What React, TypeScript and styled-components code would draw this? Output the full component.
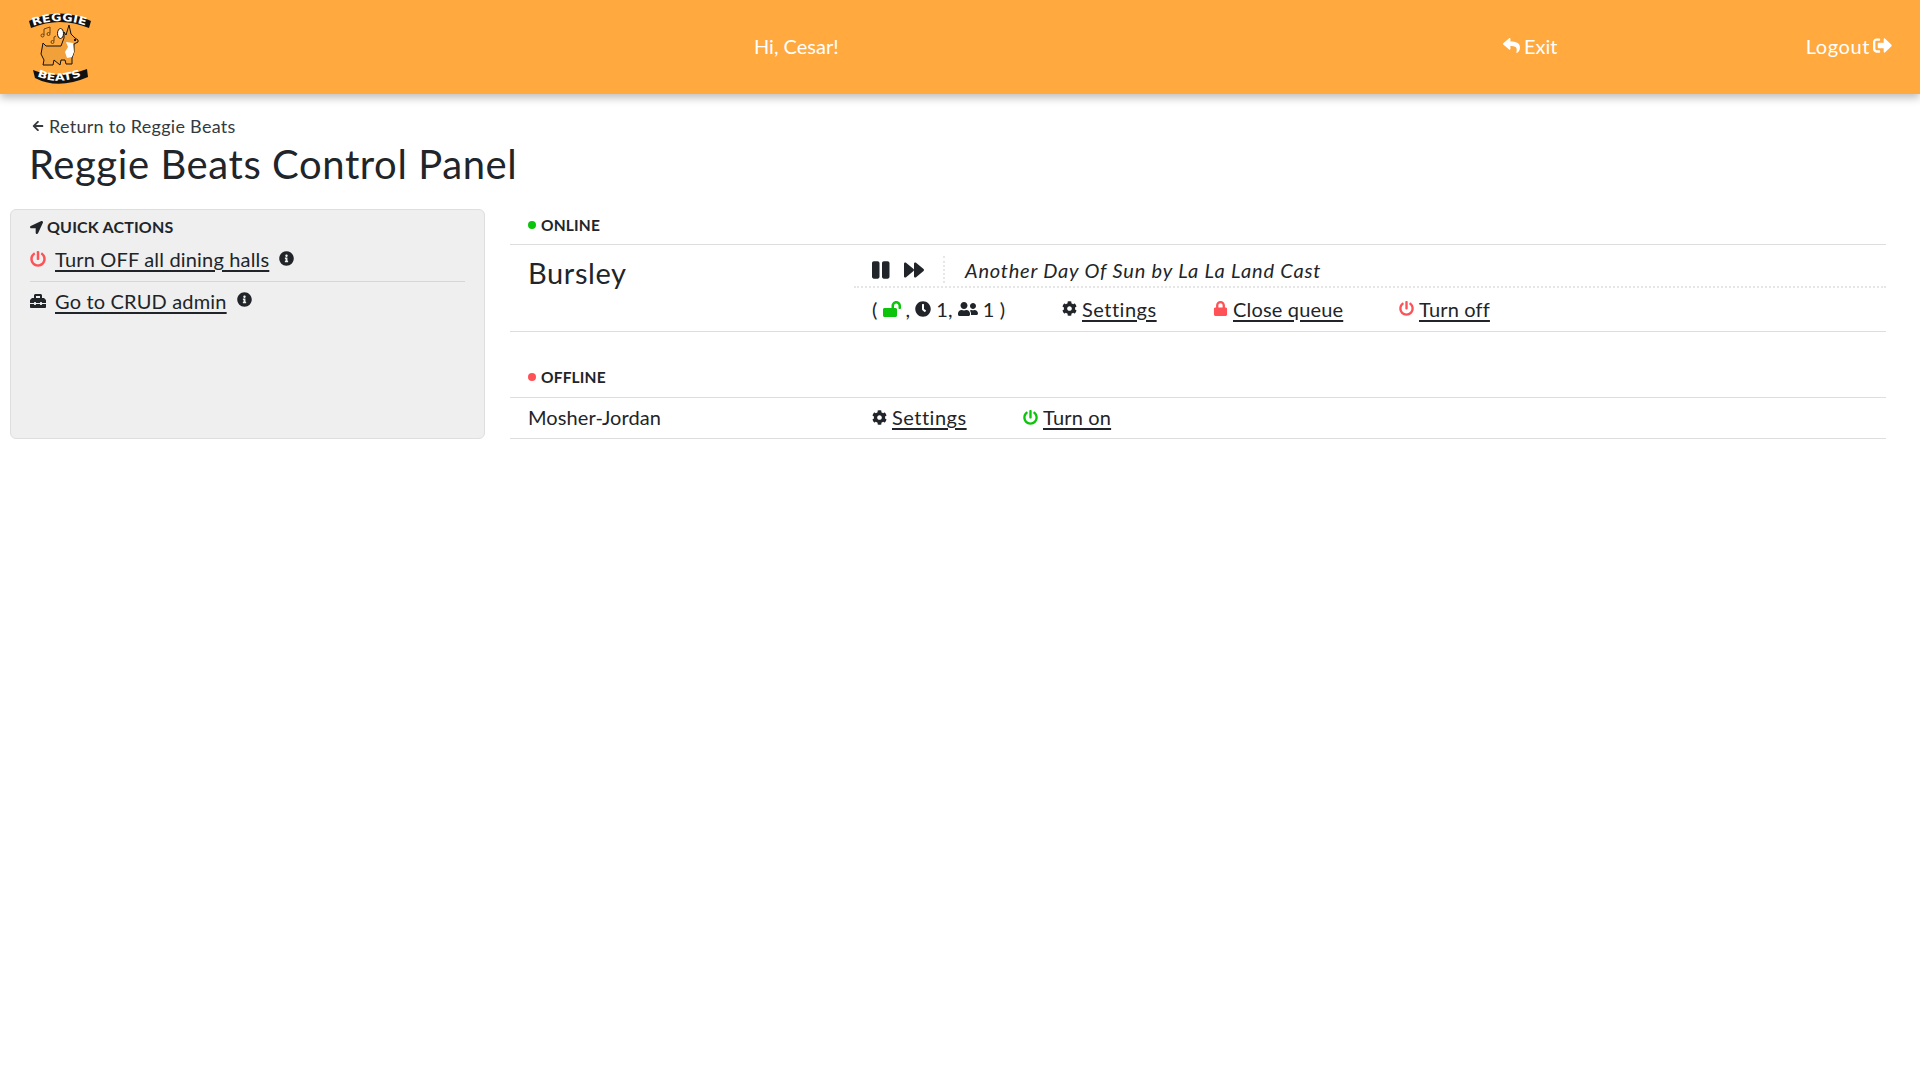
import React from "react";
import styled, { createGlobalStyle } from "styled-components";
import {
  FaArrowLeft, FaClock, FaCog, FaForward, FaInfoCircle, FaLocationArrow, FaLock, FaLockOpen,
  FaPause, FaPowerOff, FaReply, FaSignOutAlt, FaToolbox, FaUserFriends,
} from "react-icons/fa";

const INK = "#212529";
const RED = "#ff5257";
const GREEN = "#0cc40c";

const Global = createGlobalStyle`
  html, body { margin: 0; padding: 0; background: #fff; }
  body { font-family: "Lato", "Noto Sans", sans-serif; color: ${INK}; font-size: 20px; letter-spacing: .17px; }
`;

const Header = styled.header`
  height: 94px; box-sizing: border-box; background: #ffa93f; box-shadow: 0 4px 8px rgba(0,0,0,.25);
  display: grid; grid-template-columns: 726px 749px auto 1fr; align-items: center;
  padding: 0 28px 3px; color: #fff; font-size: 20px;
`;
const NavItem = styled.span`
  display: flex; align-items: center; gap: 4px; letter-spacing: 0;
  svg { width: 17px; height: 17px; }
`;
const LogoutItem = styled.span`
  display: flex; align-items: center; justify-content: flex-end; gap: 3px; letter-spacing: .6px;
  svg { width: 19px; height: 19px; }
`;
const LogoBox = styled.div`display: flex; margin-top: 3px;`;
const Top = styled.div`padding: 22px 0 0 29px;`;
const Back = styled.div`
  display: flex; align-items: center; gap: 5px; font-size: 18px; line-height: 20px; color: #343a40; padding-left: 3px; letter-spacing: .28px;
  svg { width: 12px; height: 12px; }
`;
const Title = styled.h1`margin: 4px 0 0; font-size: 40px; font-weight: 400; line-height: 48px; letter-spacing: .58px;`;
const Body = styled.main`
  display: grid; grid-template-columns: 475px 1376px; gap: 25px; padding: 21px 0 0 10px;
`;
const Panel = styled.aside`
  box-sizing: border-box; height: 230px; background: #efefef; border: 1px solid #dedede; border-radius: 6px;
  padding: 8px 19px;
`;
const Heading = styled.div`
  display: flex; align-items: center; gap: 4px; font-size: 16px; font-weight: 700; line-height: 18px; text-transform: uppercase;
  svg { width: 13px; height: 13px; }
`;
const QuickRow = styled.div<{ $first?: boolean }>`
  display: flex; align-items: center; box-sizing: border-box;
  height: ${p => p.$first ? "46px" : "37px"};
  ${p => p.$first ? "border-bottom: 1px solid #d6d6d6; padding-top: 1px;" : ""}
`;
const Slot = styled.span<{ $c?: string }>`
  display: inline-flex; width: 25px; color: ${p => p.$c ?? INK};
  svg { width: 16px; height: 16px; }
`;
const Anchor = styled.a<{ $track?: boolean }>`
  color: ${INK}; text-decoration: underline; text-underline-offset: 3px; text-decoration-thickness: 1.5px;
  ${p => p.$track ? "letter-spacing: .5px;" : ""}
`;
const Info = styled.span`
  display: inline-flex; margin-left: 10px; margin-top: -2px;
  svg { width: 15px; height: 15px; }
`;
const Sections = styled.section`display: flex; flex-direction: column;`;
const SectionHead = styled.div<{ $pb: number }>`
  display: flex; align-items: center; gap: 5px; height: 36px; padding: 0 0 ${p => p.$pb}px 18px; font-size: 15.5px; font-weight: 700;
  text-transform: uppercase; border-bottom: 1px solid #dedede; box-sizing: border-box;
`;
const Dot = styled.i<{ $c: string }>`width: 8px; height: 8px; border-radius: 50%; background: ${p => p.$c};`;
const Hall = styled.div`
  display: grid; grid-template-columns: 326px 1fr; border-bottom: 1px solid #dedede; padding-left: 18px;
`;
const HallName = styled.div<{ $big?: boolean }>`
  font-size: ${p => p.$big ? "29px" : "20px"}; padding-top: ${p => p.$big ? "9px" : "0"};
  line-height: ${p => p.$big ? "38px" : "38px"}; letter-spacing: ${p => p.$big ? ".6px" : ".1px"};
`;
const NowPlaying = styled.div`
  display: flex; align-items: center; height: 43px; border-bottom: 2px dotted #e6e6e6; padding: 12px 0 4px 18px; box-sizing: border-box;
`;
const Transport = styled.div`
  display: flex; gap: 14px; width: 71px; height: 27px; align-items: center; border-right: 2px dotted #e6e6e6; margin-right: 20px;
`;
const PauseIcon = styled(FaPause)`width: 17.5px; height: 20px;`;
const ForwardIcon = styled(FaForward)`width: 20px; height: 20px;`;
const Song = styled.em`font-size: 20px; letter-spacing: .8px;`;
const Actions = styled.div<{ $h: number }>`
  display: flex; align-items: center; box-sizing: border-box; height: ${p => p.$h}px; padding: 0 0 2px 18px;
`;
const Stats = styled.span`
  display: inline-flex; align-items: center; gap: 5px; width: 190px;
`;
const OpenLockIcon = styled(FaLockOpen)`width: 18px; height: 16px; color: ${GREEN};`;
const ClockIcon = styled(FaClock)`width: 16px; height: 16px;`;
const UsersIcon = styled(FaUserFriends)`width: 20px; height: 16px;`;
const Act = styled.span<{ $w?: number; $c?: string }>`
  display: inline-flex; align-items: center; gap: 5px; width: ${p => p.$w ? p.$w + "px" : "auto"};
  svg { width: 15px; height: 15px; color: ${p => p.$c ?? INK}; }
`;
const Spacer = styled.div`height: 30px;`;

function Logo() {
  return (
    <svg width="64" height="75" viewBox="0 0 64 75">
      <defs>
        <path id="t1" d="M5 16 Q32 6 59 16" />
        <path id="t2" d="M9 66 Q30 76 56 65" />
      </defs>
      <path d="M1 11 Q32 -4 63 11 L61 18 Q32 6 3 18Z" fill="#111" />
      <path d="M5 60 Q30 70 59 59 L60 67 Q30 80 7 68Z" fill="#111" />
      <text fontFamily="DejaVu Sans" fontWeight="700" fontSize="10.5" fill="#fff">
        <textPath href="#t1" textLength="54" lengthAdjust="spacingAndGlyphs">REGGIE</textPath>
      </text>
      <text fontFamily="DejaVu Sans" fontWeight="700" fontSize="10" fill="#fff">
        <textPath href="#t2" textLength="46" lengthAdjust="spacingAndGlyphs">BEATS</textPath>
      </text>
      <path d="M15 33 L18 36 L33 36 L36 28 L36 22 L38 25 L41 15 L43 24 L47 28 L50 30 L50 32 L46 34 L46 42 L44 48 L44 54 L38 54 L37 50 L33 50 L32 55 L26 50 L25 55 L15 55 L16 50 L13 44 Z" fill="#f2a03a" stroke="#111" strokeWidth="1" />
      <path d="M38 32 L45 33 L46 42 L44 47 L39 48 L37 42 L40 37Z" fill="#fff" />
      <ellipse cx="32.5" cy="23.5" rx="3" ry="5" fill="#fff" stroke="#111" strokeWidth="1" />
      <rect x="46" y="29" width="2" height="2" fill="#111" />
      <g fill="none" stroke="#6b4310" strokeWidth="1">
        <path d="M16 25v-6l6-2v6" /><circle cx="14.5" cy="25.5" r="1.5" /><circle cx="20.5" cy="24" r="1.5" />
        <path d="M26 31v-4l2-1" /><circle cx="24.5" cy="32" r="1.5" />
      </g>
    </svg>
  );
}

export default function App() {
  return (
    <>
      <Global />
      <Header>
        <LogoBox><Logo /></LogoBox>
        <NavItem>Hi, Cesar!</NavItem>
        <NavItem><FaReply />Exit</NavItem>
        <LogoutItem>Logout<FaSignOutAlt /></LogoutItem>
      </Header>
      <Top>
        <Back><FaArrowLeft />Return to Reggie Beats</Back>
        <Title>Reggie Beats Control Panel</Title>
      </Top>
      <Body>
        <Panel>
          <Heading><FaLocationArrow />Quick Actions</Heading>
          <QuickRow $first><Slot $c={RED}><FaPowerOff /></Slot><Anchor>Turn OFF all dining halls</Anchor><Info><FaInfoCircle /></Info></QuickRow>
          <QuickRow><Slot><FaToolbox /></Slot><Anchor>Go to CRUD admin</Anchor><Info><FaInfoCircle /></Info></QuickRow>
        </Panel>
        <Sections>
          <SectionHead $pb={4}><Dot $c={GREEN} />Online</SectionHead>
          <Hall>
            <HallName $big>Bursley</HallName>
            <div>
              <NowPlaying>
                <Transport><PauseIcon /><ForwardIcon /></Transport>
                <Song>Another Day Of Sun by La La Land Cast</Song>
              </NowPlaying>
              <Actions $h={43}>
                <Stats>( <OpenLockIcon /> , <ClockIcon /> 1, <UsersIcon /> 1 )</Stats>
                <Act $w={151}><FaCog /><Anchor $track>Settings</Anchor></Act>
                <Act $w={186} $c={RED}><FaLock /><Anchor>Close queue</Anchor></Act>
                <Act $c={RED}><FaPowerOff /><Anchor>Turn off</Anchor></Act>
              </Actions>
            </div>
          </Hall>
          <Spacer />
          <SectionHead $pb={5}><Dot $c={RED} />Offline</SectionHead>
          <Hall>
            <HallName>Mosher-Jordan</HallName>
            <Actions $h={40}>
              <Act $w={151}><FaCog /><Anchor $track>Settings</Anchor></Act>
              <Act $c={GREEN}><FaPowerOff /><Anchor>Turn on</Anchor></Act>
            </Actions>
          </Hall>
        </Sections>
      </Body>
    </>
  );
}
